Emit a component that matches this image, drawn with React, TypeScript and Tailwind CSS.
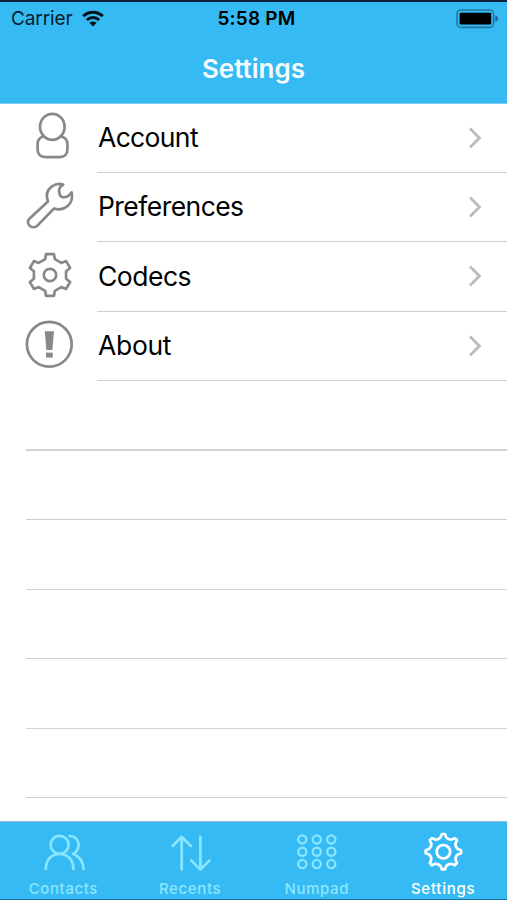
import React, { useState } from 'react';

interface SettingsItem {
  label: string;
  icon: React.ReactNode;
  rowClass: string;
  labelClass: string;
}

interface TabItem {
  label: string;
  icon: React.ReactNode;
  labelClass: string;
}

// Repeats one tooth outline around the centre of a gear
const rotatePoint = (x: number, y: number, angle: number, cx: number, cy: number) => {
  const a = (angle * Math.PI) / 180;
  const px = cx + x * Math.cos(a) - y * Math.sin(a);
  const py = cy + x * Math.sin(a) + y * Math.cos(a);
  return `${px.toFixed(2)} ${py.toFixed(2)}`;
};

const squareGear = (cx: number, cy: number) => {
  const points: string[] = [];
  for (let i = 0; i < 6; i++) {
    points.push(rotatePoint(-4.8, -15.8, i * 60, cx, cy));
    points.push(rotatePoint(-4, -20.9, i * 60, cx, cy));
    points.push(rotatePoint(4, -20.9, i * 60, cx, cy));
    points.push(rotatePoint(4.8, -15.8, i * 60, cx, cy));
  }
  return `M${points.join('L')}Z`;
};

const roundGear = (cx: number, cy: number) => {
  let d = `M${rotatePoint(-1.5, -17.7, 0, cx, cy)}`;
  for (let i = 0; i < 8; i++) {
    const angle = i * 45;
    d += `L${rotatePoint(1.5, -17.7, angle, cx, cy)}`;
    d += `L${rotatePoint(2.8, -14.4, angle, cx, cy)}`;
    d += `Q${rotatePoint(0, -12.6, angle + 22.5, cx, cy)} ${rotatePoint(-2.8, -14.4, angle + 45, cx, cy)}`;
    d += `L${rotatePoint(-1.5, -17.7, angle + 45, cx, cy)}`;
  }
  return `${d}Z`;
};

const RowIcon = ({ children }: { children: React.ReactNode }) => (
  <svg
    viewBox="0 0 50 50"
    className="w-[50px] h-[50px] mt-2.5 shrink-0 overflow-visible"
    fill="none"
    stroke="#85898b"
    strokeWidth="2.7"
    strokeLinecap="round"
    strokeLinejoin="round"
  >
    {children}
  </svg>
);

const TabIcon = ({ children }: { children: React.ReactNode }) => (
  <svg
    viewBox="0 0 44 40"
    className="w-11 h-10 shrink-0 overflow-visible"
    fill="none"
    stroke="currentColor"
    strokeWidth="2.7"
    strokeLinecap="round"
    strokeLinejoin="round"
  >
    {children}
  </svg>
);

const settingsItems: SettingsItem[] = [
  {
    label: 'Account',
    rowClass: 'h-[69px]',
    labelClass: 'tracking-[-0.65px]',
    icon: (
      <RowIcon>
        <ellipse cx="27.3" cy="12.8" rx="12.3" ry="13" />
        <path d="M18.8 22.2C14.6 23.2 12.6 26 12.6 30V35.5C12.6 40.4 15.6 43.1 20.2 43.1H34.8C39.4 43.1 42.4 40.4 42.4 35.5V30C42.4 26 40 23.2 35.8 22.2" />
      </RowIcon>
    ),
  },
  {
    label: 'Preferences',
    rowClass: 'h-[69px]',
    labelClass: 'tracking-[-0.55px]',
    icon: (
      <RowIcon>
        <path d="M4.6 35.6L23 18.6C20.6 12.4 22.3 6.8 27 3.4C30.4 1 34.6.4 38.2 1.6C34.6 3.8 33.2 7.4 34.6 11.2C36.4 15.8 42.6 15.2 46.6 9.4C47.8 14.6 46.6 19.6 42.6 23C38.8 26.2 34 27.1 29 25.5L12.4 42.6C10.2 44.8 6.6 44.8 4.5 42.6C2.4 40.6 2.4 37.6 4.6 35.6Z" />
      </RowIcon>
    ),
  },
  {
    label: 'Codecs',
    rowClass: 'h-[70px]',
    labelClass: 'tracking-[-0.5px]',
    icon: (
      <RowIcon>
        <path d={squareGear(25, 23)} />
        <circle cx="25" cy="23" r="6.2" />
      </RowIcon>
    ),
  },
  {
    label: 'About',
    rowClass: 'h-[69px]',
    labelClass: 'tracking-[-0.3px]',
    icon: (
      <RowIcon>
        <circle cx="24.3" cy="22.3" r="22.4" />
        <path d="M19.8 9.3H29L27.4 28H21.4Z" fill="#85898b" stroke="none" />
        <path d="M21 30.6H27.8V35.6H21Z" fill="#85898b" stroke="none" />
      </RowIcon>
    ),
  },
];

const emptyRows = [
  'h-[70px] border-b-2 border-[#d2d2d3]',
  'h-[69px] border-b border-[#cfcfd1]',
  'h-[70px] border-b border-[#d4d4d6]',
  'h-[69px] border-b border-[#cfcfd1]',
  'h-[70px] border-b border-[#d4d4d6]',
  'h-[69px] border-b border-[#cfcfd1]',
];

const tabs: TabItem[] = [
  {
    label: 'Contacts',
    labelClass: 'tracking-[0.6px]',
    icon: (
      <TabIcon>
        <circle cx="18.6" cy="13.8" r="9" />
        <path d="M4.8 38C4.8 28.6 10.6 23 18.6 23S32.4 28.6 32.4 38" />
        <path d="M28.6 5C34.2 5 37.6 8.8 37.6 13.8C37.6 17.8 35.6 21 32.2 22.9C38.6 25.2 42.2 30.2 42.6 38" />
      </TabIcon>
    ),
  },
  {
    label: 'Recents',
    labelClass: 'tracking-[0.65px]',
    icon: (
      <TabIcon>
        <path d="M13.7 38.5V6M4.6 15L13.7 5.8L22.8 15" />
        <path d="M32.4 5.8V38.4M23.2 29.4L32.4 38.6L41.6 29.4" />
      </TabIcon>
    ),
  },
  {
    label: 'Numpad',
    labelClass: 'tracking-[0.6px]',
    icon: (
      <TabIcon>
        {[8.4, 20.7, 33].map((cy) =>
          [7.3, 21.8, 36.3].map((cx) => <circle key={`${cx}-${cy}`} cx={cx} cy={cy} r="4.1" strokeWidth="2.3" />)
        )}
      </TabIcon>
    ),
  },
  {
    label: 'Settings',
    labelClass: 'tracking-[0.75px] -ml-px',
    icon: (
      <TabIcon>
        <path d={roundGear(21.4, 20.7)} />
        <circle cx="21.4" cy="20.7" r="6.7" />
      </TabIcon>
    ),
  },
];

const StatusBar: React.FC = () => (
  <div className="h-8 grid grid-cols-3 items-center text-black text-[19px] leading-8 pt-px">
    <div className="flex items-center pl-[11px]">
      <span className="tracking-[-0.1px] text-[#06202e]">Carrier</span>
      <svg viewBox="0 0 22 17" className="w-[22px] h-[17px] ml-[9px] -mt-px" fill="none" stroke="#021019" strokeWidth="3">
        <path d="M1.2 6.2C6.8.9 15.2.9 20.8 6.2" />
        <path d="M4.8 10C8.4 6.7 13.6 6.7 17.2 10" />
        <path d="M11 16.4L7.4 12.7C9.4 11 12.6 11 14.6 12.7Z" fill="#021019" stroke="none" />
      </svg>
    </div>
    <span className="text-center font-semibold tracking-[0.2px] pl-[6px]">5:58 PM</span>
    <svg viewBox="0 0 43 20" className="w-[43px] h-5 justify-self-end mr-[8px]">
      <rect x="1" y="1" width="36.6" height="17.4" rx="4" fill="none" stroke="#23779c" strokeWidth="1.6" />
      <rect x="3.6" y="3.8" width="31.6" height="11.8" rx="1" fill="#000" />
      <path d="M39.4 6.6C41.4 7.4 42 8.6 42 9.7S41.4 12 39.4 12.8Z" fill="#1d6585" />
    </svg>
  </div>
);

const App: React.FC = () => {
  const [activeTab, setActiveTab] = useState('Settings');

  return (
    <div className="w-[507px] h-[900px] flex flex-col overflow-hidden bg-white font-[Inter,sans-serif]">
      <header className="h-[104px] shrink-0 bg-[#36baf3] border-t-2 border-t-[#0b1f36] border-b border-b-[#7dcdf2]">
        <StatusBar />
        <h1 className="mt-[15px] text-center text-[26px] leading-10 font-semibold text-[#f4fcff]">Settings</h1>
      </header>

      <main className="flex-1 min-h-0 overflow-hidden">
        {settingsItems.map((item) => (
          <div key={item.label} className={`flex pl-[25px] ${item.rowClass}`}>
            {item.icon}
            <div className="flex-1 flex items-center justify-between ml-[22px] pl-px pr-[25px] border-b border-[#cfcfd1]">
              <span className={`text-[26.5px] text-black ${item.labelClass}`}>{item.label}</span>
              <svg viewBox="0 0 14 22" className="w-3.5 h-[22px] -mt-px" fill="none" stroke="#bcbcc0" strokeWidth="2.8">
                <path d="M2 1.5L11.4 11L2 20.5" />
              </svg>
            </div>
          </div>
        ))}
        {emptyRows.map((row, index) => (
          <div key={index} className={`ml-[26px] ${row}`} />
        ))}
      </main>

      <nav className="h-[79px] shrink-0 grid grid-cols-4 bg-[#36baf3] border-t border-t-[#93b9cb] border-b border-b-[#1a6f9e]">
        {tabs.map((tab) => (
          <button
            key={tab.label}
            onClick={() => setActiveTab(tab.label)}
            className={`flex flex-col items-center pt-[9px] ${activeTab === tab.label ? 'text-white' : 'text-[#8ae6ff]'}`}
          >
            {tab.icon}
            <span className={`mt-[8px] text-[15px] leading-5 font-medium ${tab.labelClass}`}>{tab.label}</span>
          </button>
        ))}
      </nav>
    </div>
  );
};

export default App;
